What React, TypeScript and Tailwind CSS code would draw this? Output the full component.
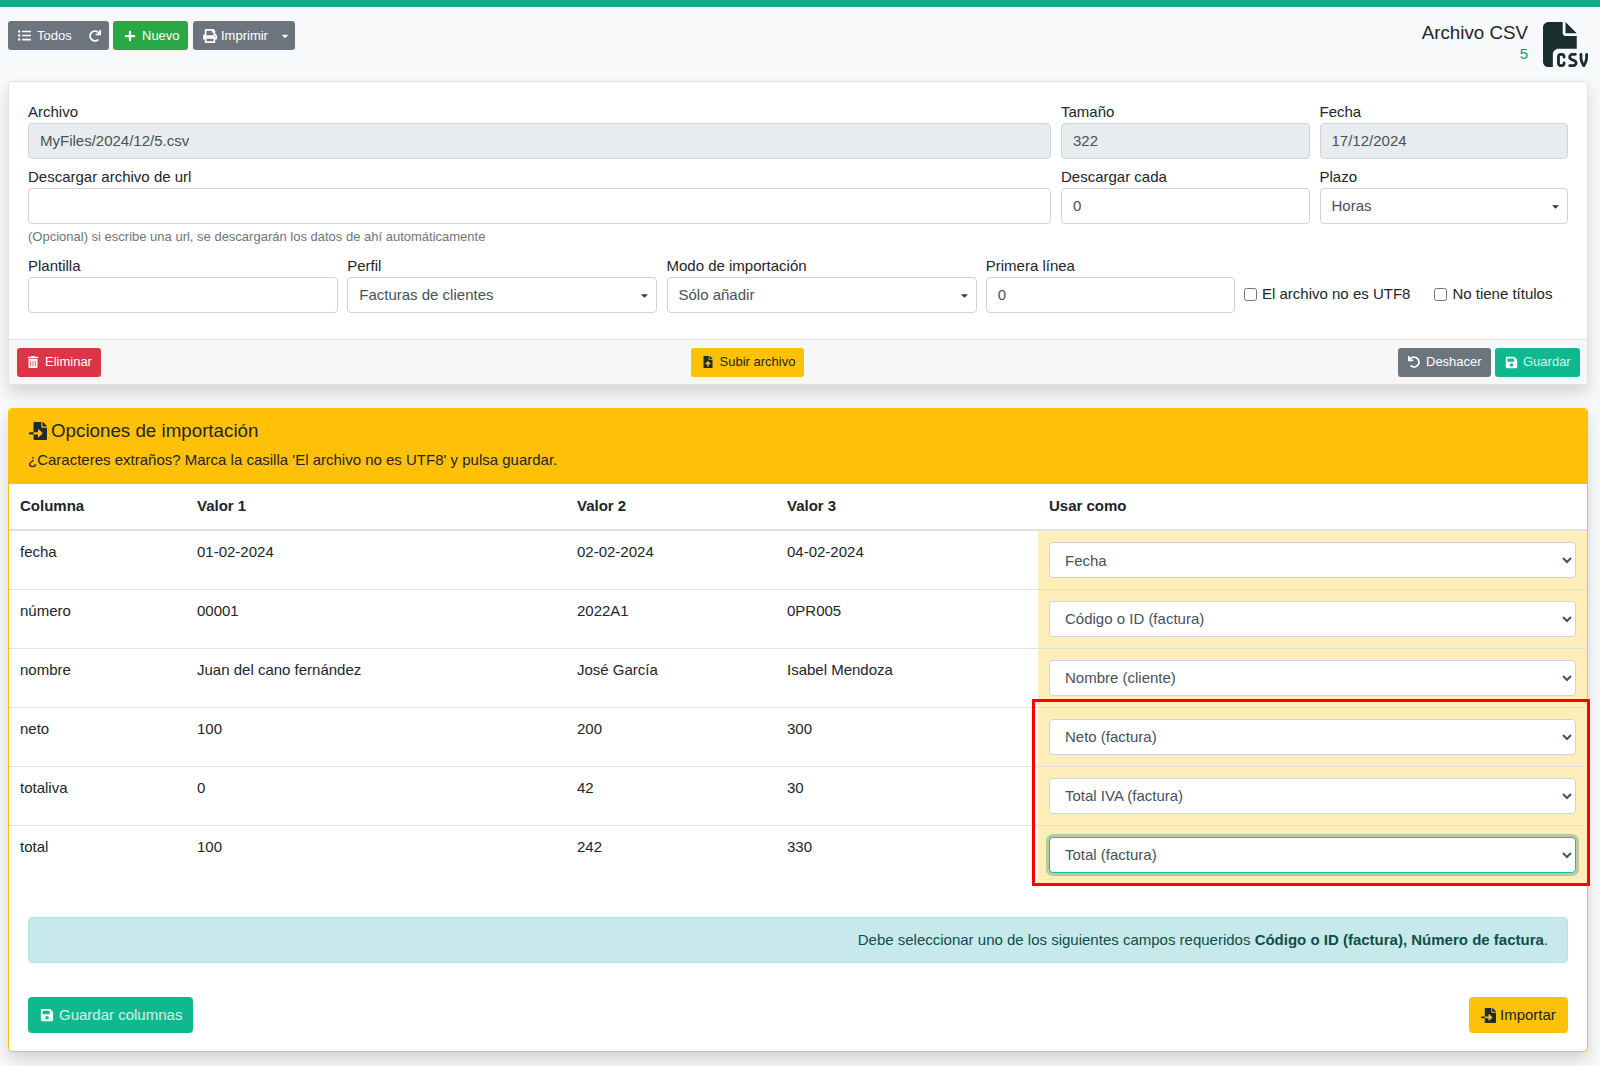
import {
  FaCaretDown,
  FaFileImport,
  FaFileUpload,
  FaListUl,
  FaPlus,
  FaPrint,
  FaRedo,
  FaSave,
  FaTrashAlt,
  FaUndo,
} from "react-icons/fa";
import { FaFileCsv } from "react-icons/fa6";

interface FieldProps {
  label: string;
  value?: string;
  disabled?: boolean;
  className?: string;
}

const rows = [
  { name: "fecha", v1: "01-02-2024", v2: "02-02-2024", v3: "04-02-2024", use: "Fecha" },
  { name: "número", v1: "00001", v2: "2022A1", v3: "0PR005", use: "Código o ID (factura)" },
  { name: "nombre", v1: "Juan del cano fernández", v2: "José García", v3: "Isabel Mendoza", use: "Nombre (cliente)" },
  { name: "neto", v1: "100", v2: "200", v3: "300", use: "Neto (factura)" },
  { name: "totaliva", v1: "0", v2: "42", v3: "30", use: "Total IVA (factura)" },
  { name: "total", v1: "100", v2: "242", v3: "330", use: "Total (factura)" },
];

function Field({ label, value = "", disabled = false, className = "" }: FieldProps) {
  return (
    <div className={className}>
      <label className="block h-[24px] leading-[25px] text-[#212529]">{label}</label>
      <input
        readOnly
        value={value}
        className={`block w-full h-[36px] px-[11px] pb-[2px] border border-[#ced4da] rounded-[4px] text-[#495057] outline-none ${
          disabled ? "bg-[#e9ecef]" : "bg-white"
        }`}
      />
    </div>
  );
}

function SelectField({ label, value, className = "" }: FieldProps) {
  return (
    <div className={className}>
      <label className="block h-[24px] leading-[25px] text-[#212529]">{label}</label>
      <div className="flex items-center justify-between h-[36px] pl-[11px] pr-[6px] border border-[#ced4da] rounded-[4px] bg-white text-[#495057]">
        <span>{value}</span>
        <FaCaretDown className="text-[11px] text-[#343a40]" />
      </div>
    </div>
  );
}

export default function App() {
  return (
    <div className="min-h-[1066px] bg-[#f8f9fa] font-['Liberation_Sans',Arial,sans-serif] text-[15px] text-[#212529]">
      <div className="h-[7px] bg-[#10ac8a]" />

      {/* Toolbar */}
      <div className="flex items-start justify-between h-[74px] pl-[8px] pr-[12px]">
        <div className="flex gap-[4px] mt-[14px] text-[13px] text-white">
          <div className="flex items-center justify-between w-[101px] h-[29px] pl-[10px] pr-[8px] rounded-[3px] bg-[#6c757d]">
            <span className="flex items-center gap-[6px]">
              <FaListUl className="text-[13px]" /> Todos
            </span>
            <FaRedo className="text-[12px]" />
          </div>
          <div className="flex items-center gap-[6px] w-[75px] h-[29px] pl-[11px] rounded-[3px] bg-[#28a745]">
            <FaPlus className="text-[12px]" /> Nuevo
          </div>
          <div className="flex items-center justify-between w-[102px] ml-[1px] h-[29px] pl-[10px] pr-[5px] rounded-[3px] bg-[#6c757d]">
            <span className="flex items-center gap-[4px]">
              <FaPrint className="text-[14px]" /> Imprimir
            </span>
            <FaCaretDown className="text-[10px]" />
          </div>
        </div>
        <div className="flex items-start gap-[15px] mt-[14px]">
          <div className="text-right">
            <div className="text-[18.75px] leading-[24px] text-[#212529]">Archivo CSV</div>
            <div className="text-[15px] leading-[17px] text-[#0e9f7e]">5</div>
          </div>
          <FaFileCsv className="w-[45px] h-[45px] mt-[1px] text-[#1a2e2c]" />
        </div>
      </div>

      <div className="pl-[8px] pr-[12px]">
        {/* Archivo card */}
        <div className="border border-[#e1e4e7] rounded-[4px] bg-white shadow-[0_8px_16px_rgba(0,0,0,0.15)]">
          <div className="pl-[19px] pr-[18px] pt-[17px] pb-[26px]">
            <div className="flex gap-[10px]">
              <Field label="Archivo" value="MyFiles/2024/12/5.csv" disabled className="w-[1023px]" />
              <Field label="Tamaño" value="322" disabled className="w-[248.5px]" />
              <Field label="Fecha" value="17/12/2024" disabled className="w-[248.5px]" />
            </div>
            <div className="flex gap-[10px] mt-[5px]">
              <div className="w-[1023px]">
                <Field label="Descargar archivo de url" />
              </div>
              <Field label="Descargar cada" value="0" className="w-[248.5px]" />
              <SelectField label="Plazo" value="Horas" className="w-[248.5px]" />
            </div>
            <div className="h-[25px] pt-[5px] text-[13px] leading-[16px] text-[#6c757d]">
              (Opcional) si escribe una url, se descargarán los datos de ahí automáticamente
            </div>
            <div className="flex gap-[9.25px] mt-[4px]">
              <Field label="Plantilla" className="w-[310px]" />
              <SelectField label="Perfil" value="Facturas de clientes" className="w-[310px]" />
              <SelectField label="Modo de importación" value="Sólo añadir" className="w-[310px]" />
              <Field label="Primera línea" value="0" className="w-[249px]" />
              <div className="flex items-center gap-[24px] pt-[24px] h-[58px]">
                <label className="flex items-center gap-[5px]">
                  <input type="checkbox" className="w-[13px] h-[13px]" /> El archivo no es UTF8
                </label>
                <label className="flex items-center gap-[5px]">
                  <input type="checkbox" className="w-[13px] h-[13px]" /> No tiene títulos
                </label>
              </div>
            </div>
          </div>
          <div className="flex items-center justify-between h-[45px] pl-[8px] pr-[7px] border-t border-[#dfe1e3] bg-[#f7f7f7] rounded-b-[4px] text-[13px]">
            <div className="flex items-center gap-[6px] w-[84px] h-[29px] pl-[10px] rounded-[3px] bg-[#dc3545] text-white">
              <FaTrashAlt className="text-[12px]" /> Eliminar
            </div>
            <div className="flex items-center gap-[6px] w-[113px] h-[29px] mr-[5px] pl-[11px] rounded-[3px] bg-[#ffc107] text-[#212529]">
              <FaFileUpload className="text-[12px] text-[#1a2e2c]" /> Subir archivo
            </div>
            <div className="flex gap-[4px] text-white">
              <div className="flex items-center gap-[6px] w-[93px] h-[29px] pl-[10px] rounded-[3px] bg-[#6c757d]">
                <FaUndo className="text-[12px]" /> Deshacer
              </div>
              <div className="flex items-center gap-[5px] w-[85px] h-[29px] pl-[10px] rounded-[3px] bg-[#10b890]">
                <FaSave className="text-[13px] shrink-0" /> <span className="text-white/80">Guardar</span>
              </div>
            </div>
          </div>
        </div>

        {/* Opciones de importacion */}
        <div className="relative mt-[23px] border border-[#ffc107] rounded-[4px] bg-white shadow-[0_8px_16px_rgba(0,0,0,0.15)]">
          <div className="h-[75px] px-[19px] pt-[10px] bg-[#ffc107] rounded-t-[3px]">
            <div className="flex items-center gap-[3px] h-[24px] text-[18.75px] text-[#212529]">
              <FaFileImport className="w-[20px] h-[18px] text-[#1a2e2c]" /> Opciones de importación
            </div>
            <div className="mt-[7px] leading-[20px]">
              ¿Caracteres extraños? Marca la casilla 'El archivo no es UTF8' y pulsa guardar.
            </div>
          </div>

          <table className="w-full table-fixed border-collapse">
            <colgroup>
              <col className="w-[177px]" />
              <col className="w-[380px]" />
              <col className="w-[210px]" />
              <col className="w-[262px]" />
              <col />
            </colgroup>
            <thead>
              <tr className="h-[46px] border-b-2 border-[#dee2e6] text-left">
                <th className="pl-[11px] pr-[10px] font-bold">Columna</th>
                <th className="px-[11px] font-bold">Valor 1</th>
                <th className="px-[11px] font-bold">Valor 2</th>
                <th className="px-[11px] font-bold">Valor 3</th>
                <th className="px-[11px] font-bold">Usar como</th>
              </tr>
            </thead>
            <tbody>
              {rows.map((row, index) => (
                <tr key={row.name} className={`h-[59px] align-top ${index > 0 ? "border-t border-[#dee2e6]" : ""}`}>
                  <td className="pl-[11px] pr-[10px] pt-[10px] leading-[22px]">{row.name}</td>
                  <td className="px-[11px] pt-[10px] leading-[22px]">{row.v1}</td>
                  <td className="px-[11px] pt-[10px] leading-[22px]">{row.v2}</td>
                  <td className="px-[11px] pt-[10px] leading-[22px]">{row.v3}</td>
                  <td className="px-[11px] pt-[11px] bg-[#ffeeba]">
                    <select
                      defaultValue={row.use}
                      className={`block w-full h-[36px] pl-[11px] rounded-[4px] bg-white text-[#495057] outline-none ${
                        index === 5
                          ? "border border-[#1abc9c] shadow-[0_0_0_3px_rgba(16,120,100,0.3)]"
                          : "border border-[#ced4da]"
                      }`}
                    >
                      <option>{row.use}</option>
                    </select>
                  </td>
                </tr>
              ))}
            </tbody>
          </table>

          <div className="px-[19px] pt-[33px] pb-[18px]">
            <div className="flex items-center justify-end h-[46px] pr-[19px] border border-[#b6e3e6] rounded-[4px] bg-[#c8e9ec] text-[#0c4f4a]">
              <span>
                Debe seleccionar uno de los siguientes campos requeridos <b>Código o ID (factura), Número de factura</b>.
              </span>
            </div>
            <div className="flex justify-between mt-[34px]">
              <div className="flex items-center gap-[5px] w-[165px] h-[36px] pl-[12px] rounded-[4px] bg-[#10b890]">
                <FaSave className="text-[14px] text-white shrink-0" /> <span className="text-white/80">Guardar columnas</span>
              </div>
              <div className="flex items-center gap-[4px] w-[99px] h-[36px] pl-[12px] rounded-[4px] bg-[#ffc107] text-[#212529]">
                <FaFileImport className="text-[15px] text-[#1a2e2c]" /> Importar
              </div>
            </div>
          </div>

          {/* Resaltado */}
          <div className="absolute left-[1023px] top-[290px] w-[558px] h-[187px] border-[3px] border-[#f00] pointer-events-none" />
        </div>
      </div>
    </div>
  );
}
